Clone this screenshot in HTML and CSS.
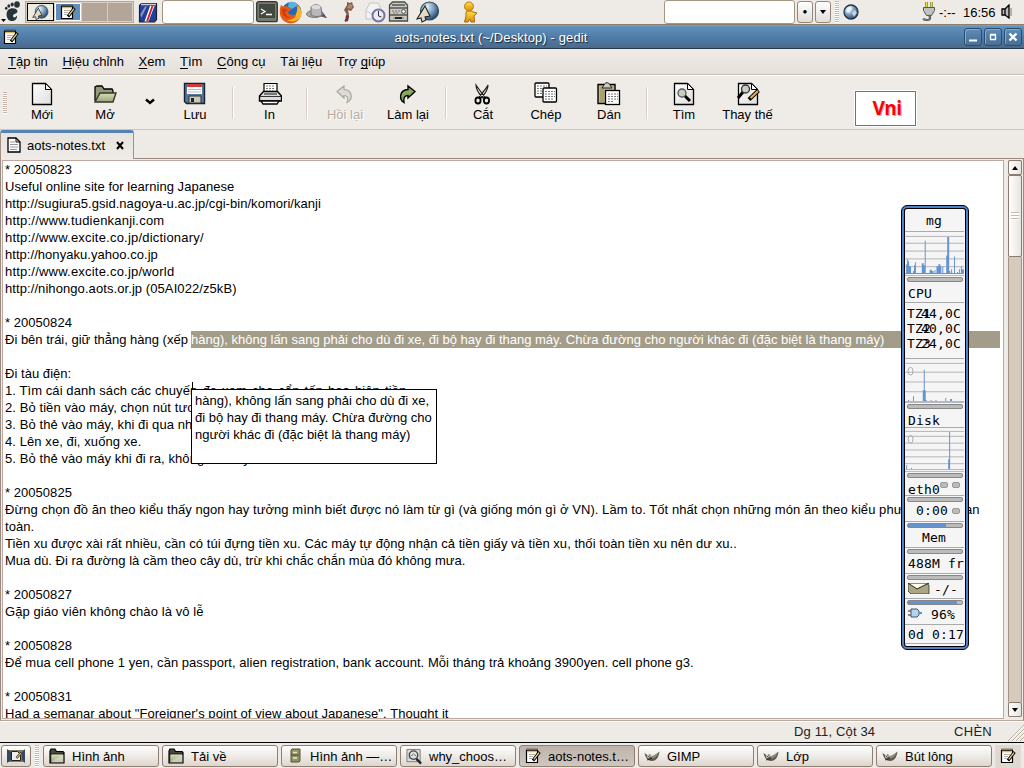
FILE: index.html
```html
<!DOCTYPE html>
<html lang="vi">
<head>
<meta charset="utf-8">
<title>aots-notes.txt (~/Desktop) - gedit</title>
<link rel="stylesheet" href="styles.css">
</head>
<body>
<svg class="defs" width="0" height="0">
  <defs>
    <linearGradient id="gold" x2="0" y2="1"><stop offset="0" stop-color="#ffe14a"/><stop offset="1" stop-color="#e08c00"/></linearGradient>
    <radialGradient id="globe" cx=".35" cy=".3" r=".75"><stop offset="0" stop-color="#e6f0f8"/><stop offset=".5" stop-color="#7ea2c4"/><stop offset="1" stop-color="#21405f"/></radialGradient>
    <linearGradient id="sheet" x2="1" y2="1"><stop offset="0" stop-color="#fff"/><stop offset="1" stop-color="#ddd"/></linearGradient>
    <linearGradient id="leaf" x2="0" y2="1"><stop offset="0" stop-color="#d9deb8"/><stop offset="1" stop-color="#9aa37c"/></linearGradient>
  </defs>
  <symbol id="note" viewBox="0 0 16 16">
    <path d="M1.500 2.500h11v12h-11z" fill="#fff" stroke="#000" stroke-width="1.200"/>
    <path d="M2 3.500h10" stroke="#dfb65c" stroke-width="1.600"/>
    <path d="M1.500 1.300h12" stroke="#222" stroke-width="1.400" stroke-dasharray="1 1"/>
    <path d="M4 6.500h6M4 8.500h4M4 10.500h3" stroke="#999" stroke-width=".8"/>
    <path d="M14.500 4L8 12.500" stroke="#000" stroke-width="3"/>
    <path d="M14 4.600L8.800 11.300" stroke="#f2cf86" stroke-width="1.300"/>
  </symbol>
  <symbol id="folder" viewBox="0 0 16 16">
    <path d="M1 3l1-2h4l1.500 2.500H14l1 1V15H1z" fill="#45483d" stroke="#000" stroke-width="1.200"/>
    <path d="M3.500 6h11v8.500H1.800V6.500z" fill="url(#leaf)" stroke="#000" stroke-width=".7"/>
    <path d="M2 14l11-7h1.500v7.500H2z" fill="#dfe0d6" opacity=".6"/>
  </symbol>
  <symbol id="gimp" viewBox="0 0 16 16">
    <path d="M.5 5l3.500 2.500L6 6l1.500 2c3 0 5-2 8-4.500-.5 5-3 9.500-7.500 9.500C4 13 1.500 10 .5 5z" fill="#5d5a4c"/>
    <path d="M8 8.500l6.500-4c-1.500 4-4 6-6.500 6z" fill="#918c78"/>
    <circle cx="4.300" cy="8.500" r="1.200" fill="#fff"/><circle cx="6.800" cy="8" r="1.100" fill="#fff"/>
    <circle cx="4.300" cy="8.500" r=".6"/><circle cx="6.800" cy="8" r=".6"/>
    <path d="M3 12l5-1.500" stroke="#312f27"/>
  </symbol>
  <symbol id="cursorball" viewBox="0 0 24 24">
    <circle cx="13.500" cy="11" r="9" fill="url(#globe)" stroke="#30475d" stroke-width="1.2"/>
    <path d="M8 14c-2-5 2-10 7-10-4 2-6 5-4 9" fill="#fff" opacity=".45"/>
    <path d="M9 6L1 19l4-1 1 4 4-2-1-3 5-1z" fill="#e3dcc5" stroke="#222" stroke-width="1.1"/>
  </symbol>
</svg>

<div class="desktop">
  <header class="panel">
    <svg class="foot" width="26" height="24" viewBox="0 0 26 24">
      <g fill="#23343a"><path d="M8 10c3-3 9-2 9.500 1 0 3-4.500 2.500-4.500 5 0 2 2.500 2 4-.5.500 4-3 6-6 5.500-4-.5-6-7-3-11z"/><ellipse cx="17" cy="4.500" rx="2.800" ry="3.200"/><ellipse cx="12.200" cy="4.400" rx="1.600" ry="2"/><ellipse cx="8.800" cy="6" rx="1.500" ry="1.800"/><ellipse cx="6.200" cy="8.300" rx="1.300" ry="1.500"/></g>
      <path d="M1 19h5l-2.500 3z"/>
    </svg>
    <div class="pager">
      <span class="space space--white"><svg width="17" height="17"><use href="#cursorball"/></svg></span>
      <span class="space space--active"><svg width="16" height="16"><use href="#note"/></svg></span>
      <span class="space"></span><span class="space"></span>
    </div>
    <svg class="dict" width="20" height="21" viewBox="0 0 20 21"><path d="M1.500 3.500l2-2h15v16l-2 2.500h-15z" fill="#243f96" stroke="#172036" stroke-width="1.200"/><path d="M3 2.500h15" stroke="#ccc" stroke-width="1.5"/><path d="M6.500 19.500L12 4h4.500l-6 15.500z" fill="#fff"/><path d="M8 19.500L13.500 4h2L10 19.500z" fill="#c5263a"/><path d="M2.500 12L7 4.500h2L3 16z" fill="#8c97c8"/></svg>
    <div class="entry entry--short"></div>
    <svg class="app app--term" width="22" height="22" viewBox="0 0 22 22"><rect x=".7" y=".7" width="20.600" height="20" rx="2" fill="#777b6f" stroke="#33362f" stroke-width="1.300"/><rect x="3" y="3" width="16" height="14" fill="#424940"/><path d="M5 8l4 2.500-4 2.500M10 13.500h6" fill="none" stroke="#fff" stroke-width="1.300"/></svg>
    <svg class="app app--fox" width="24" height="24" viewBox="0 0 24 24"><circle cx="12.500" cy="12" r="10" fill="#2666b2"/><path d="M10 2c5-1 8 1 9 3l-6 4-4-2z" fill="#58b0e5"/><path d="M2 5l3 2c2-2 4-1 5 1l3 1-4 3c1 4 7 4 9 1 1-3 0-5-1-7 4 2 6 7 4 12-3 6-11 7-16 3S0 10 2 5z" fill="#e65b12"/><path d="M17 14c1-3 2-6 1-9 5 3 6 10 2 14-4 3-9 3-12 1 5 0 9-2 9-6z" fill="#f7b52c"/><path d="M3 9c2-1 4 0 6 1l-3 2c1 4 3 5 6 6-6 1-10-4-9-9z" fill="#d23b0c"/></svg>
    <svg class="app app--hat" width="22" height="20" viewBox="0 0 22 20"><path d="M15 8l6 8-8-2z" fill="#3e536a"/><path d="M17 13l4 3-3-.5z" fill="#bd4938"/><ellipse cx="8.500" cy="12" rx="8" ry="3.500" fill="#aaa" stroke="#777"/><path d="M5 5c3-3 7-3 10 0l1 8c-3 2-7 2-11 0z" fill="#b8b8b8" stroke="#777"/><ellipse cx="10" cy="5" rx="4.500" ry="2" fill="#ddd"/></svg>
    <svg class="app app--gnome" width="14" height="22" viewBox="0 0 14 22"><path d="M5 1l3 1 2-1 1 3 1 2-3 4-3-1 1 5-1 5-4 1 3-4-1-4-2-3 3-5z" fill="#7d5d4c"/><path d="M7 3l4 1-2 4-4-1z" fill="#b28b68"/><path d="M4 14l3 1-1 5-3 1z" fill="#713036"/></svg>
    <svg class="app app--mail" width="22" height="22" viewBox="0 0 22 22"><path d="M2 9l4-7h8l3 6v10H2z" fill="#f3f3f3" stroke="#c4c4c4"/><path d="M3 10l6 4 6-5" fill="none" stroke="#ccc"/><circle cx="14.500" cy="14.500" r="6" fill="#ecebf5" stroke="#77739f" stroke-width="2"/><path d="M14.500 10v5l3 1" fill="none" stroke="#333"/></svg>
    <svg class="app app--case" width="21" height="22" viewBox="0 0 21 22"><path d="M1.500 4l3-3h12l3 3v16h-18z" fill="#c9c9c2" stroke="#4d4d47" stroke-width="1.300"/><path d="M4 4h13M2 7h17M2 14h17" stroke="#555" stroke-width="1.500"/><path d="M4 10h8M5 12h6M5 17h11" stroke="#777" stroke-dasharray="2 1"/><circle cx="15.500" cy="10.500" r="2" fill="#eee" stroke="#555"/><path d="M7 17h7" stroke="#222" stroke-width="2"/></svg>
    <svg class="app app--ball" width="24" height="24"><use href="#cursorball"/></svg>
    <svg class="app app--man" width="18" height="22" viewBox="0 0 18 22"><path d="M4 11c2-1.500 5-1.500 7 0l4 1-3 3 .5 6H9l-1.500-3L6 21H2.500L4 15z" fill="url(#gold)" stroke="#a76a0c"/><circle cx="7" cy="5.500" r="4.500" fill="url(#gold)" stroke="#b87b12"/></svg>
    <div class="entry entry--long"></div>
    <button class="mini">●</button><button class="mini mini--drop"><i class="tri tri--down"></i></button>
    <i class="grip grip--panel"></i>
    <svg class="world" width="16" height="16" viewBox="0 0 16 16"><circle cx="8" cy="8" r="7" fill="url(#globe)" stroke="#20354a" stroke-width="1.3"/><path d="M4 4l4-2 1 3-3 4-3-1zM9 9l3-3 2 3-3 4z" fill="#fff" opacity=".65"/></svg>
    <svg class="plug" width="14" height="22" viewBox="0 0 14 22"><path d="M4.500 1v6M9.500 1v6" stroke="#8c850b" stroke-width="2.500"/><path d="M4.500 1v5M9.500 1v5" stroke="#e5dd3c"/><path d="M1.500 6.500h11v3l-3 5h-5l-3-5z" fill="#bfc2be" stroke="#55584f"/><path d="M7 14c3 5-1 6-6 4" fill="none" stroke="#333" stroke-width="2.200"/><path d="M7 14c3 5-1 6-6 4" fill="none" stroke="#aaa" stroke-width=".8"/></svg>
    <span class="batt">-:--</span>
    <span class="clock">16:56</span>
    <svg class="vol" width="12" height="16" viewBox="0 0 12 16"><path d="M1 5h3v6H1zM4 5l4-4v13l-4-3z" fill="#bbb" stroke="#000" stroke-width="1.300"/><path d="M10 4v8" stroke="#777"/></svg>
  </header>

  <div class="titlebar">
    <svg class="titlebar-icon" width="16" height="16"><use href="#note"/></svg>
    <div class="titlebar-text">aots-notes.txt (~/Desktop) - gedit</div>
    <div class="winbtns">
      <span><svg width="18" height="18"><path d="M5 12.500h8" stroke="#fff" stroke-width="2"/></svg></span>
      <span><svg width="18" height="18"><path d="M6.500 6.500h5v5h-5zM6 7h6" fill="none" stroke="#fff" stroke-width="1.300"/></svg></span>
      <span><svg width="18" height="18"><path d="M5.500 5.500l7 7M12.500 5.500l-7 7" stroke="#fff" stroke-width="2.400"/></svg></span>
    </div>
  </div>

  <nav class="menubar">
    <span><u>T</u>ập tin</span><span><u>H</u>iệu chỉnh</span><span><u>X</u>em</span><span><u>T</u>ìm</span><span><u>C</u>ông cụ</span><span>Tài <u>l</u>iệu</span><span>Trợ <u>g</u>iúp</span>
  </nav>

  <div class="toolbar">
    <i class="grip grip--tool"></i>
    <div class="tool"><svg width="24" height="24" viewBox="0 0 24 24"><path d="M2.500 1.500h13l6 6v15h-19z" fill="url(#sheet)" stroke="#000" stroke-width="1.3"/><path d="M15.500 1.500v6h6z" fill="#fff" stroke="#000"/></svg>Mới</div>
    <div class="tool"><svg width="24" height="24" viewBox="0 0 24 24"><path d="M2 19V5l2-1h5l2 3h8l1 2v3" fill="#969a79" stroke="#000" stroke-width="1.300"/><path d="M2 20L7 11h16l-3 9z" fill="url(#leaf)" stroke="#34372a" stroke-width="1.400"/></svg>Mở</div>
    <div class="tool-drop"><svg width="10" height="7" viewBox="0 0 10 7"><path d="M1 1.500l4 3.500 4-3.500" fill="none" stroke="#000" stroke-width="2.400"/></svg></div>
    <div class="tool"><svg width="24" height="24" viewBox="0 0 24 24"><path d="M1.500 1.500h20v20h-18l-2-2z" fill="#54789b" stroke="#16222d" stroke-width="1.400"/><path d="M4 2h15v10H4z" fill="#fff"/><path d="M4 3.500h15" stroke="#d53b3b" stroke-width="3"/><path d="M5 7.500h13M5 10h13" stroke="#bbb"/><path d="M6 14h12v7H6z" fill="#c8c8be" stroke="#333"/><path d="M8 16h3v4H8z" fill="#222"/></svg>Lưu</div>
    <i class="sep"></i>
    <div class="tool"><svg width="24" height="24" viewBox="0 0 24 24"><path d="M6 11V1.500h13V11" fill="#fff" stroke="#000" stroke-width="1.200"/><path d="M8 4h9M8 6.500h9M8 9h8" stroke="#777" stroke-dasharray="2 1"/><path d="M1.500 14l4-4.500h14l4 4.500v5h-22z" fill="#ddd" stroke="#000" stroke-width="1.400"/><path d="M2 14.500h21" stroke="#333"/><path d="M3 19h18l-2 3H5z" fill="#fff" stroke="#000" stroke-width="1.300"/><path d="M6 12h13" stroke="#555" stroke-width="1.500"/></svg>In</div>
    <i class="sep"></i>
    <div class="tool tool--off"><svg width="24" height="24" viewBox="0 0 24 24"><path d="M4 9.500L11 4v3.500c9 .5 9 10 3 13 2-5 0-7-3-7V16z" fill="#ddd9d4" stroke="#aaa6a0" stroke-width="1.200"/></svg>Hồi lại</div>
    <div class="tool"><svg width="24" height="24" viewBox="0 0 24 24"><path d="M19 9.500L12 4v3.500c-9 .5-9 10-4 13-1-5 1-7 4-7V16z" fill="#87aa59" stroke="#000" stroke-width="1.400"/></svg>Làm lại</div>
    <i class="sep"></i>
    <div class="tool"><svg width="24" height="24" viewBox="0 0 24 24"><path d="M5 3c0 4 2 8 7 13l2-1C10 10 7 6 5 3zM17 3c0 4-2 8-7 13l-2-1c3-4 7-8 9-12z" fill="#ddd" stroke="#222" stroke-width="1.200"/><ellipse cx="7" cy="18.500" rx="2.600" ry="3" fill="none" stroke="#000" stroke-width="1.800"/><ellipse cx="15.500" cy="18.500" rx="2.600" ry="3" fill="none" stroke="#000" stroke-width="1.800"/></svg>Cắt</div>
    <div class="tool"><svg width="24" height="24" viewBox="0 0 24 24"><rect x="1" y="1" width="14" height="14" rx="1" fill="#fff" stroke="#000" stroke-width="1.300"/><path d="M3 4h10M3 6.500h10M3 9h10M3 11.500h6" stroke="#777" stroke-dasharray="2 1"/><rect x="9" y="6" width="13.500" height="14" rx="1" fill="#fff" stroke="#000" stroke-width="1.300"/><path d="M11 9.500h10M11 12h10M11 14.500h10M11 17h8" stroke="#777" stroke-dasharray="2 1"/></svg>Chép</div>
    <div class="tool"><svg width="24" height="24" viewBox="0 0 24 24"><path d="M1 2.500h17v19H1z" fill="#c3b67d" stroke="#000" stroke-width="1.400"/><path d="M3 5h4v15H3z" fill="#aaa073"/><path d="M5 6l2-3c1-3 5-3 6 0l2 3z" fill="#ccc" stroke="#222"/><rect x="8.500" y="8.500" width="14" height="14" fill="#fff" stroke="#000" stroke-width="1.300"/><path d="M11 12h10M11 14.500h10M11 17h10M11 19.500h6" stroke="#777" stroke-dasharray="2 1"/></svg>Dán</div>
    <i class="sep"></i>
    <div class="tool"><svg width="24" height="24" viewBox="0 0 24 24"><path d="M2.500 1.500h13l6 6v15h-19z" fill="url(#sheet)" stroke="#000" stroke-width="1.3"/><path d="M15.500 1.500v6h6z" fill="#fff" stroke="#000"/><path d="M12 13l6 6" stroke="#000" stroke-width="3"/><circle cx="10" cy="11" r="4" fill="#c9cfbd" stroke="#555" stroke-width="1.300"/></svg>Tìm</div>
    <div class="tool"><svg width="24" height="24" viewBox="0 0 24 24"><path d="M2.500 1.500h13l6 6v15h-19z" fill="url(#sheet)" stroke="#000" stroke-width="1.3"/><path d="M15.500 1.500v6h6z" fill="#fff" stroke="#000"/><path d="M7 10l-5 6" stroke="#000" stroke-width="3"/><circle cx="9.500" cy="7" r="4" fill="#c9cfbd" stroke="#333" stroke-width="1.300"/><path d="M22.500 8.500l-9.500 9" stroke="#000" stroke-width="4"/><path d="M22 9l-7.500 7" stroke="#f0ad32" stroke-width="2.200"/></svg>Thay thế</div>
  </div>

  <div class="tabs">
    <div class="tab">
      <svg width="16" height="16" viewBox="0 0 16 16"><path d="M2 1h8l4 4v10H2z" fill="#fff" stroke="#000" stroke-width="1.300"/><path d="M10 1v4h4" fill="none" stroke="#000"/><path d="M4 5h5M4 7.500h8M4 10h8M4 12.500h7" stroke="#999"/></svg>
      <span>aots-notes.txt</span>
      <svg class="tab-x" width="8" height="9" viewBox="0 0 8 9"><path d="M1 1l6 7M7 1L1 8" stroke="#000" stroke-width="2"/></svg>
    </div>
  </div>

  <main class="editor">
    <div class="text">
      <p>* 20050823</p>
      <p>Useful online site for learning Japanese</p>
      <p>http://sugiura5.gsid.nagoya-u.ac.jp/cgi-bin/komori/kanji</p>
      <p class="looser">http://www.tudienkanji.com</p>
      <p class="looser">http://www.excite.co.jp/dictionary/</p>
      <p>http://honyaku.yahoo.co.jp</p>
      <p class="looser">http://www.excite.co.jp/world</p>
      <p class="loose">http://nihongo.aots.or.jp (05AI022/z5kB)</p>
      <p></p>
      <p>* 20050824</p>
      <p class="row"><span class="lead">Đi bên trái, giữ thẳng hàng (xếp </span><span class="sel">hàng), không lấn sang phải cho dù đi xe, đi bộ hay đi thang máy. Chừa đường cho người khác đi (đặc biệt là thang máy)</span></p>
      <p></p>
      <p>Đi tàu điện:</p>
      <p class="loose">1. Tìm cái danh sách các chuyến<span class="behind"> đe xem cho cẩn tấn hoa hiên tiền</span></p>
      <p class="loose">2. Bỏ tiền vào máy, chọn nút tương ứng</p>
      <p class="loose">3. Bỏ thẻ vào máy, khi đi qua nhớ lấy</p>
      <p class="loose">4. Lên xe, đi, xuống xe.</p>
      <p class="loose">5. Bỏ thẻ vào máy khi đi ra, không cần lấy</p>
      <p></p>
      <p>* 20050825</p>
      <p class="wide">Đừng chọn đồ ăn theo kiểu thấy ngon hay tưởng mình biết được nó làm từ gì (và giống món gì ở VN). Lầm to. Tốt nhất chọn những món ăn theo kiểu phương châm an</p>
      <p>toàn.</p>
      <p>Tiền xu được xài rất nhiều, cần có túi đựng tiền xu. Các máy tự động nhận cả tiền giấy và tiền xu, thối toàn tiền xu nên dư xu..</p>
      <p class="plain">Mua dù. Đi ra đường là cầm theo cây dù, trừ khi chắc chắn mùa đó không mưa.</p>
      <p></p>
      <p>* 20050827</p>
      <p class="loose">Gặp giáo viên không chào là vô lễ</p>
      <p></p>
      <p>* 20050828</p>
      <p>Để mua cell phone 1 yen, cần passport, alien registration, bank account. Mỗi tháng trả khoảng 3900yen. cell phone g3.</p>
      <p></p>
      <p>* 20050831</p>
      <p class="wide">Had a semanar about "Foreigner's point of view about Japanese". Thought it</p>
    </div>
    <div class="scroll">
      <span class="sbtn"><i class="tri tri--up"></i></span>
      <span class="thumb"><i></i></span>
      <span class="trough"></span>
      <span class="sbtn"><i class="tri tri--down"></i></span>
    </div>
  </main>

  <div class="status"><span class="pos">Dg 11, Cột 34</span><span class="mode">CHÈN</span><svg width="18" height="18" viewBox="0 0 18 18"><path d="M2 18L18 2M6 18L18 6M10 18l8-8M14 18l4-4" stroke="#b9afa3"/><path d="M3 18L18 3M7 18L18 7M11 18l7-7" stroke="#fff"/></svg></div>

  <footer class="taskbar">
    <div class="task task--show"><svg width="18" height="14" viewBox="0 0 18 14"><path d="M0 1h18v12H0z" fill="#7a7f62"/><path d="M0 0l4 3v8l-4 3zM18 0l-3 3v8l3 3z" fill="#3a465c"/><path d="M4.500 2.500h6l3 3v6h-9z" fill="#eee" stroke="#222"/><path d="M14.500 3.500L9.500 9" stroke="#222" stroke-width="2.400"/><path d="M14 4L9.800 8.700" stroke="#e5aa38" stroke-width="1.300"/></svg></div>
    <i class="grip grip--task"></i>
    <div class="task"><svg width="16" height="16"><use href="#folder"/></svg><span>Hình ảnh</span></div>
    <div class="task"><svg width="16" height="16"><use href="#folder"/></svg><span>Tải về</span></div>
    <div class="task"><svg width="16" height="16" viewBox="0 0 16 16"><path d="M4 2l1-1h8v12l-1 1H4z" fill="#929065" stroke="#54533a"/><path d="M4 7h8" stroke="#484731"/><path d="M6 4.500h4M6 10h4" stroke="#ece9bd" stroke-width="1.500"/></svg><span>Hình ảnh —…</span></div>
    <div class="task"><svg width="16" height="17" viewBox="0 0 17 17"><path d="M1 1h14v13H1z" fill="#ddd" stroke="#777"/><path d="M3 4h9v7H3z" fill="#aaa"/><circle cx="8" cy="7" r="4.500" fill="#ddd" stroke="#444" stroke-width="1.400"/><path d="M5 8l3-2 3 2" stroke="#777" fill="none"/><path d="M11 11l5 5" stroke="#222" stroke-width="2.500"/></svg><span>why_choos…</span></div>
    <div class="task task--on"><svg width="16" height="16"><use href="#note"/></svg><span>aots-notes.t…</span></div>
    <div class="task"><svg width="16" height="16"><use href="#gimp"/></svg><span>GIMP</span></div>
    <div class="task"><svg width="16" height="16"><use href="#gimp"/></svg><span>Lớp</span></div>
    <div class="task"><svg width="16" height="16"><use href="#gimp"/></svg><span>Bút lông</span></div>
    <div class="notify"><svg width="16" height="16"><use href="#note"/></svg></div>
  </footer>

  <div class="vni">Vni</div>

  <div class="drag">hàng), không lấn sang phải cho dù đi xe,<br>đi bộ hay đi thang máy. Chừa đường cho<br>người khác đi (đặc biệt là thang máy)</div>
  <i class="caret"></i>

  <aside class="krell">
    <div class="k k--host">mg</div>
    <svg class="k-chart" width="60" height="44" viewBox="0 0 60 44"><path d="M0 4.500h60M0 11.500h60M0 19.500h60M0 27.500h60M0 35.500h60" stroke="#b4b4b4"/><path d="M1 43V33h1V28h1v2h1v5h2v8zM5 43v-7h1v7zM8 43v-3h1v-6h1v-3h1v12zM14 43v-1h2v1zM17 43V32h2v2h1V9h1v34zM25 43v-4h1v-1h1v2h2v3zM30 43v-4h1v4zM32 43v-8h2v-2h2v2h1v8zM38 43v-8h1v8zM42 43V24h1V5h2v35h1v3zM47 43v-5h1v5zM50 43V25h1v18zM53 43v-2h1v2zM55 43v-5h1v5zM57 43v-8h1v3h2v5zM0 43v-1h58v1z" fill="#6593cf"/></svg>
    <i class="k-bar"></i>
    <div class="k k--cpu">CPU</div>
    <div class="k-temp"><div><span>TZ1</span><b>44,0C</b></div><div><span>TZ2</span><b>40,0C</b></div><div><span>TZ3</span><b>24,0C</b></div></div>
    <svg class="k-chart" width="60" height="44" viewBox="0 0 60 44"><path d="M0 4.500h60M0 13.500h60M0 23.500h60M0 33.500h60M0 43.500h60" stroke="#b4b4b4"/><ellipse cx="5.500" cy="12.500" rx="2.500" ry="4" fill="none" stroke="#aaa"/><path d="M3 43v-1h1v1zM8 43v-5h1v5zM18 43V32h1V11h1v21h1v10h1v1zM26 43v-1h1v1zM31 43v-1h1v1zM41 43v-3h1v3zM46 43v-2h2v2z" fill="#6593cf"/></svg>
    <i class="k-bar"></i>
    <div class="k k--disk">Disk</div>
    <svg class="k-chart" width="60" height="44" viewBox="0 0 60 44"><path d="M0 3.500h60M0 8.500h60M0 15.500h60M0 22.500h60M0 29.500h60M0 36.500h60M0 42.500h60" stroke="#b4b4b4"/><ellipse cx="5.500" cy="11.500" rx="2.500" ry="4" fill="none" stroke="#aaa"/><path d="M1 42v-4h1v4zM6 42v-1h1v1zM44 42V32h1V4h1v38z" fill="#6593cf"/></svg>
    <i class="k-bar"></i>
    <div class="k k--eth">eth0<i class="led"></i><i class="led led--gap"></i></div>
    <i class="k-bar"></i>
    <div class="k k--time">0:00<i class="led"></i></div>
    <i class="k-bar k-bar--mem"></i>
    <div class="k k--mid">Mem</div>
    <i class="k-bar"></i>
    <div class="k k--free">488M fr</div>
    <i class="k-bar"></i>
    <div class="k k--mail"><svg width="22" height="11" viewBox="0 0 22 11"><path d="M0 0h18l3 2v9H3L0 8z" fill="#aaa583" stroke="#222" stroke-width=".7"/><path d="M0 0l9 6 12-6z" fill="#fffde8" stroke="#222"/></svg><span>-/-</span></div>
    <i class="k-bar k-bar--bat"></i>
    <div class="k k--bat"><svg width="14" height="10" viewBox="0 0 14 10"><path d="M0 3h5M0 7h5" stroke="#222"/><path d="M3 1h6l2 2v4L9 9H3z" fill="#b2d4f0" stroke="#456"/><path d="M11 5h3" stroke="#37a5c7" stroke-width="2"/></svg><span>96%</span></div>
    <div class="k k--up">0d 0:17</div>
  </aside>
</div>
</body>
</html>
```
FILE: styles.css
```css
* { box-sizing: border-box; }
body { margin: 0; font: 13px/17px "Liberation Sans", sans-serif; color: #000; background: #efebe7; overflow: hidden; }
svg { display: block; flex: none; }
.defs { position: absolute; }
u { text-underline-offset: 2px; text-decoration-skip-ink: none; }
.desktop { position: relative; width: 1024px; height: 768px; display: flex; flex-direction: column; overflow: hidden; }

/* top panel */
.panel { height: 25px; flex: none; display: flex; align-items: center; background: #eeebe7; border-bottom: 1px solid #8c7f6c; }
.panel > * { flex: none; }
.foot { margin-right: -1px; }
.pager { display: flex; width: 109px; height: 22px; gap: 1px; background: #d8cfc4; padding: 1px; border: 1px solid #b6a99a; }
.space { flex: 1; background: #b3a698; display: flex; align-items: center; justify-content: center; }
.space--white { background: #eeebe0; border: 1px solid #000; }
.space--active { background: #5f8dbc; border: 1px solid #fff; }
.dict { margin-left: 4px; }
.entry { height: 24px; background: #fff; border: 1px solid #a59583; border-radius: 3px; }
.entry--short { width: 92px; margin-left: 4px; }
.entry--long { width: 131px; margin-left: 184px; }
.app--term { margin-left: 2px; }
.app--fox { margin-left: 1px; }
.app--hat { margin-left: 3px; }
.app--gnome { margin-left: 14px; }
.app--mail { margin-left: 8px; }
.app--case { margin-left: 2px; }
.app--ball { margin-left: 7px; }
.app--man { margin-left: 22px; }
.mini { width: 16px; height: 22px; margin-left: 2px; padding: 0; font-size: 8px; line-height: 20px; border: 1px solid #95887a; border-radius: 3px; background: linear-gradient(#fff, #e2ddd6); display: flex; align-items: center; justify-content: center; color: #000; }
.tri { border: 3px solid transparent; }
.tri--down { border-top: 4px solid #000; border-bottom: 0; }
.tri--up { border-bottom: 4px solid #000; border-top: 0; }
.grip { flex: none; width: 4px; background: repeating-linear-gradient(#cbb5ab 0 1px, #fff 1px 2px); }
.grip--panel { height: 22px; margin-left: 4px; }
.world { margin-left: 4px; }
.plug { margin-left: 63px; }
.batt { margin-left: 3px; width: 18px; padding-top: 1px; }
.clock { margin-left: 6px; width: 34px; padding-top: 1px; }
.vol { margin-left: 4px; }

/* title bar */
.titlebar { height: 24px; flex: none; display: flex; align-items: center; padding: 0 2px 0 3px; background: linear-gradient(#7ba3c5 0, #6090ba 8%, #4e7ba6 55%, #4b6a8b 94%, #26384b 95%); }
.titlebar-text { flex: 1; text-align: center; color: #fff; text-shadow: 1px 1px 1px #182634; letter-spacing: .12px; padding-right: 1px; }
.winbtns { display: flex; gap: 2px; }
.winbtns span { width: 18px; height: 18px; border: 1px solid #2b4c70; border-radius: 3px; box-shadow: inset 1px 1px #86aace; display: flex; align-items: center; justify-content: center; }

/* menu */
.menubar { height: 26px; flex: none; display: flex; gap: 14.7px; padding: 4px 8px 0; background: linear-gradient(#efebe7, #e5e0da); border-bottom: 1px solid #cfc0b4; }

/* toolbar */
.toolbar { height: 55px; flex: none; display: grid; grid-template-columns: 10.5px 63px 63px 27px 63px 12px 62px 13px 63px 63px 12px 63px 63px 63px 12px 63px 64px; border-top: 1px solid #fff; border-bottom: 1px solid #cfc5ba; }
.grip--tool { height: 22px; margin: 16px 0 0 3px; }
.tool { display: flex; flex-direction: column; align-items: center; padding-top: 6px; white-space: nowrap; }
.tool--off { color: #b5aea6; text-shadow: 1px 1px #fff; }
.tool-drop { padding: 22px 0 0 8px; }
.sep { width: 2px; height: 32px; margin: 11px 0 0 5px; background: linear-gradient(90deg, #d9cfc7 50%, #fff 50%); }

/* tabs */
.tabs { height: 29px; flex: none; display: flex; border-bottom: 1px solid #988a80; background: #eeebe7; }
.tab { width: 134px; height: 29px; display: flex; align-items: center; padding: 0 9px 2px 5px; border: 1px solid #a48f84; border-top: 3px solid #5584b4; border-bottom: 0; border-radius: 3px 3px 0 0; background: linear-gradient(#e7e3df, #efebe7); }
.tab span { flex: 1; margin-left: 5px; }

/* editor */
.editor { height: 562px; flex: none; display: flex; padding: 1px 1px 3px 2px; border-left: 1px solid #988a80; border-right: 1px solid #988a80; border-bottom: 1px solid #b8a89d; }
.text { width: 1002px; height: 559px; margin-left: -1px; overflow: hidden; background: #fff; border: 1px solid #bba9a2; padding-left: 2px; letter-spacing: .042px; flex: none; }
.text p { margin: 0; height: 17px; white-space: pre; }
.text .loose { letter-spacing: .08px; }
.text .looser { letter-spacing: .21px; }
.text .wide { letter-spacing: .057px; }
.text .plain { letter-spacing: 0; }
.behind { word-spacing: 1.4px; }
.row { display: flex; letter-spacing: 0; }
.lead { width: 186px; }
.sel { width: 809px; background: #a39c89; color: #fff; }
.scroll { width: 15px; margin-left: 4px; display: flex; flex-direction: column; background: #d6cabd; }
.sbtn, .thumb { flex: none; display: flex; align-items: center; justify-content: center; border: 1px solid #8c7b70; border-radius: 2px; background: linear-gradient(90deg, #fff, #e8e3de); }
.sbtn { height: 15px; }
.thumb { height: 82px; }
.thumb i { width: 8px; height: 8px; background: repeating-linear-gradient(#c9b7ac 0 1px, #fff 1px 3px); }
.trough { flex: 1; border: 1px solid #a59386; border-width: 0 1px; }

/* status bar */
.status { height: 22px; flex: none; display: flex; background: #eeebe7; border-top: 1px solid #fff; border-bottom: 1px solid #000; color: #222; padding-top: 1px; }
.pos { width: 160px; margin-left: 794px; letter-spacing: .15px; }
.mode { width: 52px; letter-spacing: .3px; }

/* taskbar */
.taskbar { flex: 1; display: flex; align-items: flex-start; gap: 3px; padding: 2px 0 0 1px; background: #eeebe7; }
.task { width: 116px; height: 22px; flex: none; display: flex; align-items: center; padding-left: 5px; border: 1px solid #8f7f73; border-radius: 3px; background: linear-gradient(#fff, #efebe6 50%, #ddd6ce); white-space: nowrap; }
.task span { margin-left: 7px; }
.task--show { width: 30px; }
.task--on { background: linear-gradient(#bdb3aa, #cfc8c0); }
.grip--task { height: 22px; margin: 0 1px; width: 4px; }
.notify { height: 24px; width: 26px; padding: 3px 0 0 5px; background: #e0d9d1; }

/* windows above the editor */
.vni { position: absolute; left: 855px; top: 91px; width: 61px; height: 35px; border: 1px solid #4a7bab; outline: 1px solid #fff; background: #fff; color: #f00; font: bold 19px/33px "Open Sans", "DejaVu Sans", sans-serif; letter-spacing: -.6px; text-align: center; padding-left: 3px; text-shadow: 1px 1px #bbb; }
.drag { position: absolute; left: 191px; top: 389px; width: 246px; height: 75px; border: 1px solid #000; background: #fff; padding: 2px 0 0 3px; white-space: nowrap; }
.caret { position: absolute; left: 192px; top: 382px; width: 1px; height: 7px; background: #000; }

/* system monitor */
.krell { position: absolute; left: 901px; top: 205px; width: 68px; height: 445px; padding: 4px 3px; border: 1px solid #000; border-radius: 6px; background: #f5f5f5; box-shadow: inset 0 0 0 2px #4f82c8, inset 0 0 0 3px #000; display: flex; flex-direction: column; font: 13px/13px "DejaVu Sans Mono", monospace; letter-spacing: .17px; overflow: hidden; }
.k, .k-temp { flex: none; margin-right: 1px; border-bottom: 1px solid #aaa; padding-left: 3px; white-space: pre; display: flex; }
.k--host { height: 22px; padding: 4px 0 0 21px; }
.k-chart { width: 59px; border-bottom: 1px solid #bbb; }
.k-bar { flex: none; height: 5px; margin: 1px 2px 0; border: 1px solid #888; border-radius: 2px; background: #bbb; }
.k--cpu { height: 21px; padding-top: 5px; }
.k-temp { height: 56px; flex-direction: column; padding: 4px 0 0 2px; }
.k-temp div { display: flex; height: 15px; }
.k-temp b { font-weight: normal; margin-left: -10px; }
.k--disk { height: 19px; padding-top: 5px; }
.k--eth { height: 18px; padding-top: 5px; }
.led { width: 8px; height: 6px; margin-top: -1px; border: 1px solid #999; border-radius: 2px; background: #bbb; }
.led--gap { margin-left: 4px; }
.k--time { height: 20px; padding: 2px 0 0 11px; }
.k--time .led { margin: 4px 0 0 4px; }
.k-bar--mem { background: linear-gradient(90deg, #6593cf 71%, #bbb 71%); }
.k-bar--bat { background: linear-gradient(90deg, #6593cf 91%, #bbb 91%); }
.k--mid { height: 20px; padding: 3px 0 0 17px; }
.k--free { height: 20px; padding-top: 3px; }
.k--mail { height: 19px; padding-top: 3px; gap: 4px; }
.k--bat { height: 20px; padding-top: 3px; gap: 9px; }
.k--up { height: 19px; padding-top: 3px; }
```
